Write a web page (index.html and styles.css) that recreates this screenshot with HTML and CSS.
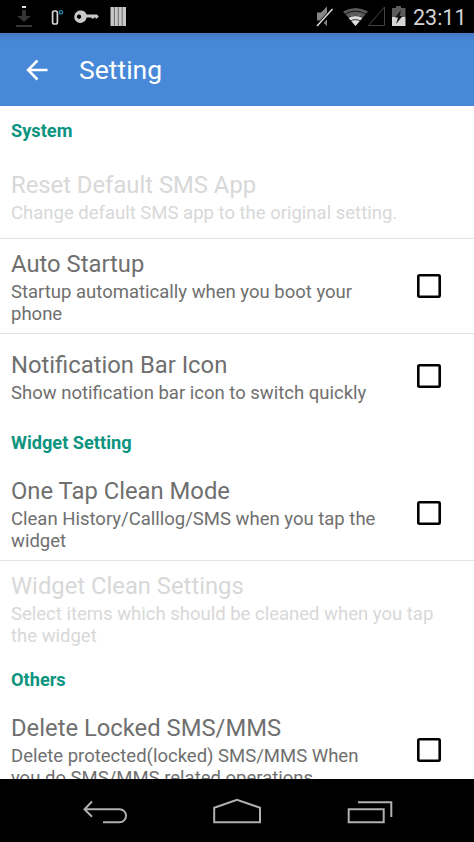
FILE: index.html
```html
<!DOCTYPE html>
<html lang="en">
<head>
<meta charset="utf-8">
<title>Setting</title>
<link rel="stylesheet" href="styles.css">
</head>
<body>
<div class="screen">
  <header class="status">
    <svg class="status-icons" width="158" height="33" viewBox="0 0 158 33">
      <path d="M22 10h4v6h5l-7 6-7-6h5z" fill="#353535"/><path d="M22 6h4v2h-4z" fill="#ddd"/><path d="M16 25h16v2H16z" fill="#353535"/>
      <rect x="52.600" y="11" width="4.800" height="13" rx="1.800" fill="none" stroke="#d4d4d4" stroke-width="1.700"/>
      <circle cx="61" cy="12.300" r="1.700" fill="none" stroke="#2583ad" stroke-width="1.300"/>
      <path fill="#c9c9c9" fill-rule="evenodd" d="M81 10.600a6.200 6.200 0 0 1 5.600 3.900H97l1.800 2L97 18.500h-1.500v-1h-1.500v1h-2.500v-1H86.600A6.200 6.200 0 1 1 81 10.600zM79 14.500a2.200 2.200 0 1 0 .1 0z"/>
      <path d="M110.500 7h15.500v19h-15.500z" fill="#c8c8c8"/><path d="M114.400 7v19M118.300 7v19M122.200 7v19" stroke="#555" stroke-width=".8"/>
    </svg>
    <div class="status-right">
      <svg width="108" height="33" viewBox="300 0 108 33">
        <path d="M317 12.500h4l6-6v19.500l-6-5.500h-4z" fill="#858585"/><path d="M317.500 26.500l15.500-17" stroke="#000" stroke-width="4.500"/><path d="M317 26l15.500-17" stroke="#ddd" stroke-width="1.500"/>
        <path d="M343 11.500q12.500-7 25 0L355.500 26z" fill="#5b5b5b"/>
        <path d="M348 17.300q7.500-4.600 15 0L355.500 26z" fill="#ddd"/>
        <path d="M344 14.600q11.500-7 23 0M347 18.100q8.500-5 17 0M350 21.300q5.500-3.400 11 0" fill="none" stroke="#000" stroke-width=".8"/>
        <path d="M384.500 7v18.500h-16z" fill="none" stroke="#444" stroke-width="1"/>
        <path d="M392 8h4V6h5v2h4.500v9H392z" fill="#5b5b5b"/><path d="M392 17h13.500v9H392z" fill="#d6d6d6"/>
        <path d="M401 10l-6 7.500h3l-2 6.500 6.500-8h-3z" fill="#111"/>
      </svg>
      <span class="clock">23:11</span>
    </div>
  </header>
  <div class="appbar">
    <svg class="up" width="22" height="22" viewBox="0 0 22 22"><path d="M21.500 11H2.500M11.500 1.500L2 11l9.500 9.500" fill="none" stroke="#fff" stroke-width="2.500"/></svg>
    <h1>Setting</h1>
  </div>
  <main class="list">
    <h2>System</h2>
    <section class="row single disabled ruled">
      <div class="text"><h3>Reset Default SMS App</h3><p>Change default SMS app to the original setting.</p></div>
    </section>
    <section class="row ruled">
      <div class="text"><h3>Auto Startup</h3><p>Startup automatically when you boot your<br>phone</p></div>
      <svg class="check" width="24" height="24" viewBox="0 0 24 24"><rect x="1.300" y="1.300" width="21.400" height="21.400" rx="1"/></svg>
    </section>
    <section class="row single">
      <div class="text"><h3>Notification Bar Icon</h3><p>Show notification bar icon to switch quickly</p></div>
      <svg class="check" width="24" height="24" viewBox="0 0 24 24"><rect x="1.300" y="1.300" width="21.400" height="21.400" rx="1"/></svg>
    </section>
    <h2>Widget Setting</h2>
    <section class="row ruled">
      <div class="text"><h3>One Tap Clean Mode</h3><p>Clean History/Calllog/SMS when you tap the<br>widget</p></div>
      <svg class="check" width="24" height="24" viewBox="0 0 24 24"><rect x="1.300" y="1.300" width="21.400" height="21.400" rx="1"/></svg>
    </section>
    <section class="row disabled">
      <div class="text"><h3>Widget Clean Settings</h3><p>Select items which should be cleaned when you tap<br>the widget</p></div>
    </section>
    <h2>Others</h2>
    <section class="row">
      <div class="text"><h3>Delete Locked SMS/MMS</h3><p>Delete protected(locked) SMS/MMS When<br>you do SMS/MMS related operations.</p></div>
      <svg class="check" width="24" height="24" viewBox="0 0 24 24"><rect x="1.300" y="1.300" width="21.400" height="21.400" rx="1"/></svg>
    </section>
  </main>
  <nav class="navbar">
    <svg width="474" height="63" viewBox="0 779 474 63" fill="none" stroke="#b0b0b0" stroke-width="2">
      <path d="M92 801.500l-7.500 7.700 7.500 7.500M85 809.200h34.500a6.500 6.500 0 0 1 0 13.100H103"/>
      <path d="M214.200 822.300v-14.600L237 799.800l23 7.900v14.600z"/>
      <path d="M348.700 809.200h35v13.100h-35zM358 802.300h33.300V817"/>
    </svg>
  </nav>
</div>
</body>
</html>
```
FILE: styles.css
```css
body { margin: 0; font-family: Roboto, "Liberation Sans", sans-serif; }
h1, h2, h3, p { margin: 0; font-weight: 400; white-space: nowrap; }
svg { display: block; }
.screen { width: 474px; height: 842px; display: flex; flex-direction: column; overflow: hidden; background: #fff; }
.status { height: 33px; flex: none; display: flex; justify-content: space-between; background: #000; }
.status-right { display: flex; width: 174px; }
.clock { margin-left: 5px; color: #d4d4d4; font-size: 21.5px; line-height: 35px; }
.appbar { height: 73px; flex: none; display: flex; align-items: center; background: linear-gradient(#4579c4, #4888d9 9px, #4888d9); }
.up { margin-left: 26px; }
.appbar h1 { margin-left: 31px; padding-top: 1px; color: #fff; font-size: 26.5px; line-height: 32px; }
.list { flex: 1; min-height: 0; overflow: hidden; }
h2 { height: 48px; padding-left: 11px; color: #0b9480; font-size: 18.2px; font-weight: 700; line-height: 49px; }
.row { height: 94px; display: flex; justify-content: space-between; padding: 0 33px 0 11px; }
.single { height: 84px; }
.ruled { border-bottom: 1px solid #e3e3e3; }
.text { padding-top: 11px; color: #6f6f6f; }
.single .text { padding-top: 17px; }
.disabled .text { color: #d8d8d8; }
h3 { font-size: 23.8px; line-height: 28px; }
p { margin-top: 4px; font-size: 18.5px; line-height: 21.6px; }
.check { flex: none; align-self: center; fill: none; stroke: #000; stroke-width: 2.6px; }
.navbar { height: 63px; flex: none; background: #000; }
```
